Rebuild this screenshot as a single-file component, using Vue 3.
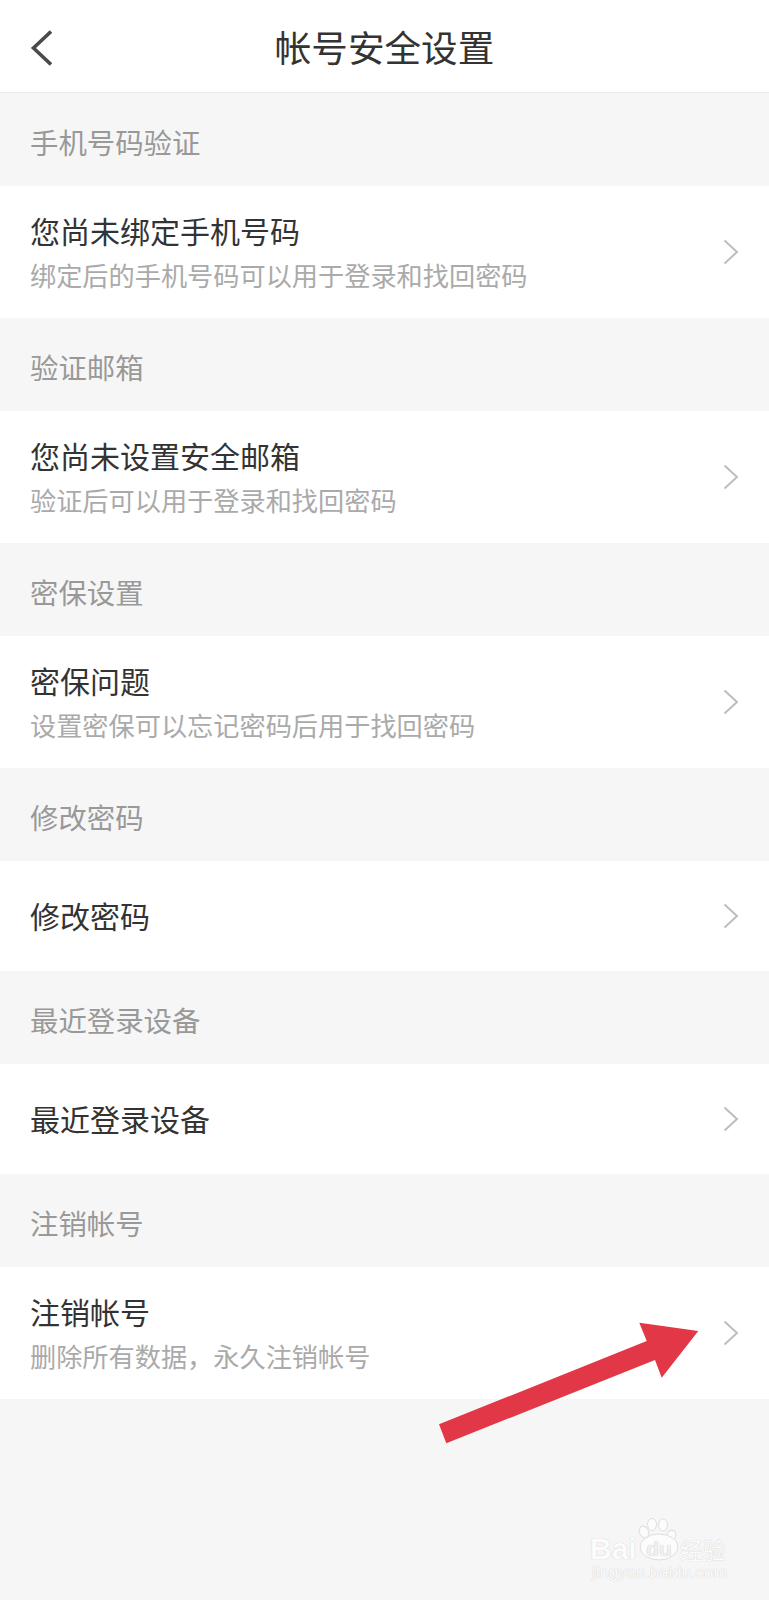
<script setup>
const sections = [
  { label: "手机号码验证", title: "您尚未绑定手机号码", desc: "绑定后的手机号码可以用于登录和找回密码" },
  { label: "验证邮箱", title: "您尚未设置安全邮箱", desc: "验证后可以用于登录和找回密码" },
  { label: "密保设置", title: "密保问题", desc: "设置密保可以忘记密码后用于找回密码" },
  { label: "修改密码", title: "修改密码" },
  { label: "最近登录设备", title: "最近登录设备" },
  { label: "注销帐号", title: "注销帐号", desc: "删除所有数据，永久注销帐号" },
];
</script>

<template>
  <div class="page">
    <header class="nav">
      <svg class="back" width="24" height="38" viewBox="0 0 24 38">
        <path d="M21 2.5 L3.5 19 L21 35.5" fill="none" stroke="#4a4a4a" stroke-width="3.6" />
      </svg>
      <h1>帐号安全设置</h1>
    </header>

    <section v-for="s in sections" :key="s.label">
      <div class="label">{{ s.label }}</div>
      <div class="row" :class="{ tall: s.desc }">
        <div>
          <div class="title">{{ s.title }}</div>
          <div v-if="s.desc" class="desc">{{ s.desc }}</div>
        </div>
        <svg width="16" height="26" viewBox="0 0 16 26">
          <path d="M1.5 1.5 L14 13 L1.5 24.5" fill="none" stroke="#bdbdbd" stroke-width="2" />
        </svg>
      </div>
    </section>

    <svg class="arrow" width="280" height="135" viewBox="430 1315 280 135">
      <polygon points="439,1424.3 446.3,1443.3 655,1360 661.7,1377.7 698.3,1331 639.3,1322.7 646.7,1341" fill="#e23747" />
    </svg>

    <!-- baidu jingyan watermark -->
    <div class="mark">
      <svg class="paw" width="46" height="46" viewBox="0 0 46 46">
        <g fill="#fcfcfc" stroke="#dedede" stroke-width="1">
          <ellipse cx="6" cy="15" rx="4.5" ry="6" transform="rotate(-25 6 15)" />
          <ellipse cx="14" cy="7.5" rx="4.5" ry="6" />
          <ellipse cx="25" cy="8" rx="4.5" ry="6" />
          <ellipse cx="33" cy="19" rx="4.5" ry="6" transform="rotate(25 33 19)" />
          <ellipse cx="21" cy="30" rx="19" ry="13" />
        </g>
      </svg>
      <div class="brand"><span class="bai">Bai</span><span class="du">du</span><span class="jy">经验</span></div>
      <div class="url">jingyan.baidu.com</div>
    </div>
  </div>
</template>

<style scoped>
.page {
  position: relative;
  width: 769px;
  height: 1600px;
  background: #f6f6f6;
  font-family: "Noto Sans CJK SC", "Noto Sans", sans-serif;
  overflow: hidden;
}

.nav {
  position: relative;
  display: flex;
  align-items: center;
  justify-content: center;
  height: 92px;
  background: #fff;
  border-bottom: 1px solid #ececec;
}

.nav h1 {
  margin: 0;
  font-size: 36.6px;
  font-weight: 400;
  color: #333;
}

.back {
  position: absolute;
  left: 30px;
  top: 29px;
}

.label {
  display: flex;
  align-items: center;
  height: 93px;
  padding: 3px 0 0 30px;
  box-sizing: border-box;
  font-size: 28.4px;
  color: #999;
}

.row {
  display: flex;
  align-items: center;
  justify-content: space-between;
  height: 110px;
  padding: 0 30px;
  background: #fff;
}

.row.tall {
  height: 132px;
}

.title {
  font-size: 30px;
  line-height: 44px;
  color: #333;
  transform: translateY(-1px);
}

.desc {
  font-size: 26.2px;
  line-height: 42px;
  color: #aaa;
  transform: translateY(1px);
}

.arrow {
  position: absolute;
  left: 430px;
  top: 1315px;
}

.mark {
  position: absolute;
  left: 588px;
  top: 1515px;
  width: 142px;
  height: 72px;
  color: #fcfcfc;
  text-shadow: 0 0 1px #bdbdbd;
}

.paw {
  position: absolute;
  left: 50px;
  top: 2px;
}

.brand {
  position: absolute;
  left: 2px;
  top: 20px;
  display: flex;
  align-items: baseline;
  font-family: "Liberation Sans", sans-serif;
  font-size: 30px;
  font-weight: 700;
  line-height: 28px;
  white-space: nowrap;
}

.bai {
  width: 48px;
}

.du {
  width: 42px;
  text-align: center;
  font-size: 21px;
  color: #f0f0f0;
  transform: translateY(-3px);
}

.jy {
  font-family: "Noto Sans CJK SC", sans-serif;
  font-size: 23px;
  font-weight: 400;
}

.url {
  position: absolute;
  left: 4px;
  top: 49px;
  font-family: "Liberation Sans", sans-serif;
  font-size: 16.8px;
  line-height: 17px;
  white-space: nowrap;
}
</style>
